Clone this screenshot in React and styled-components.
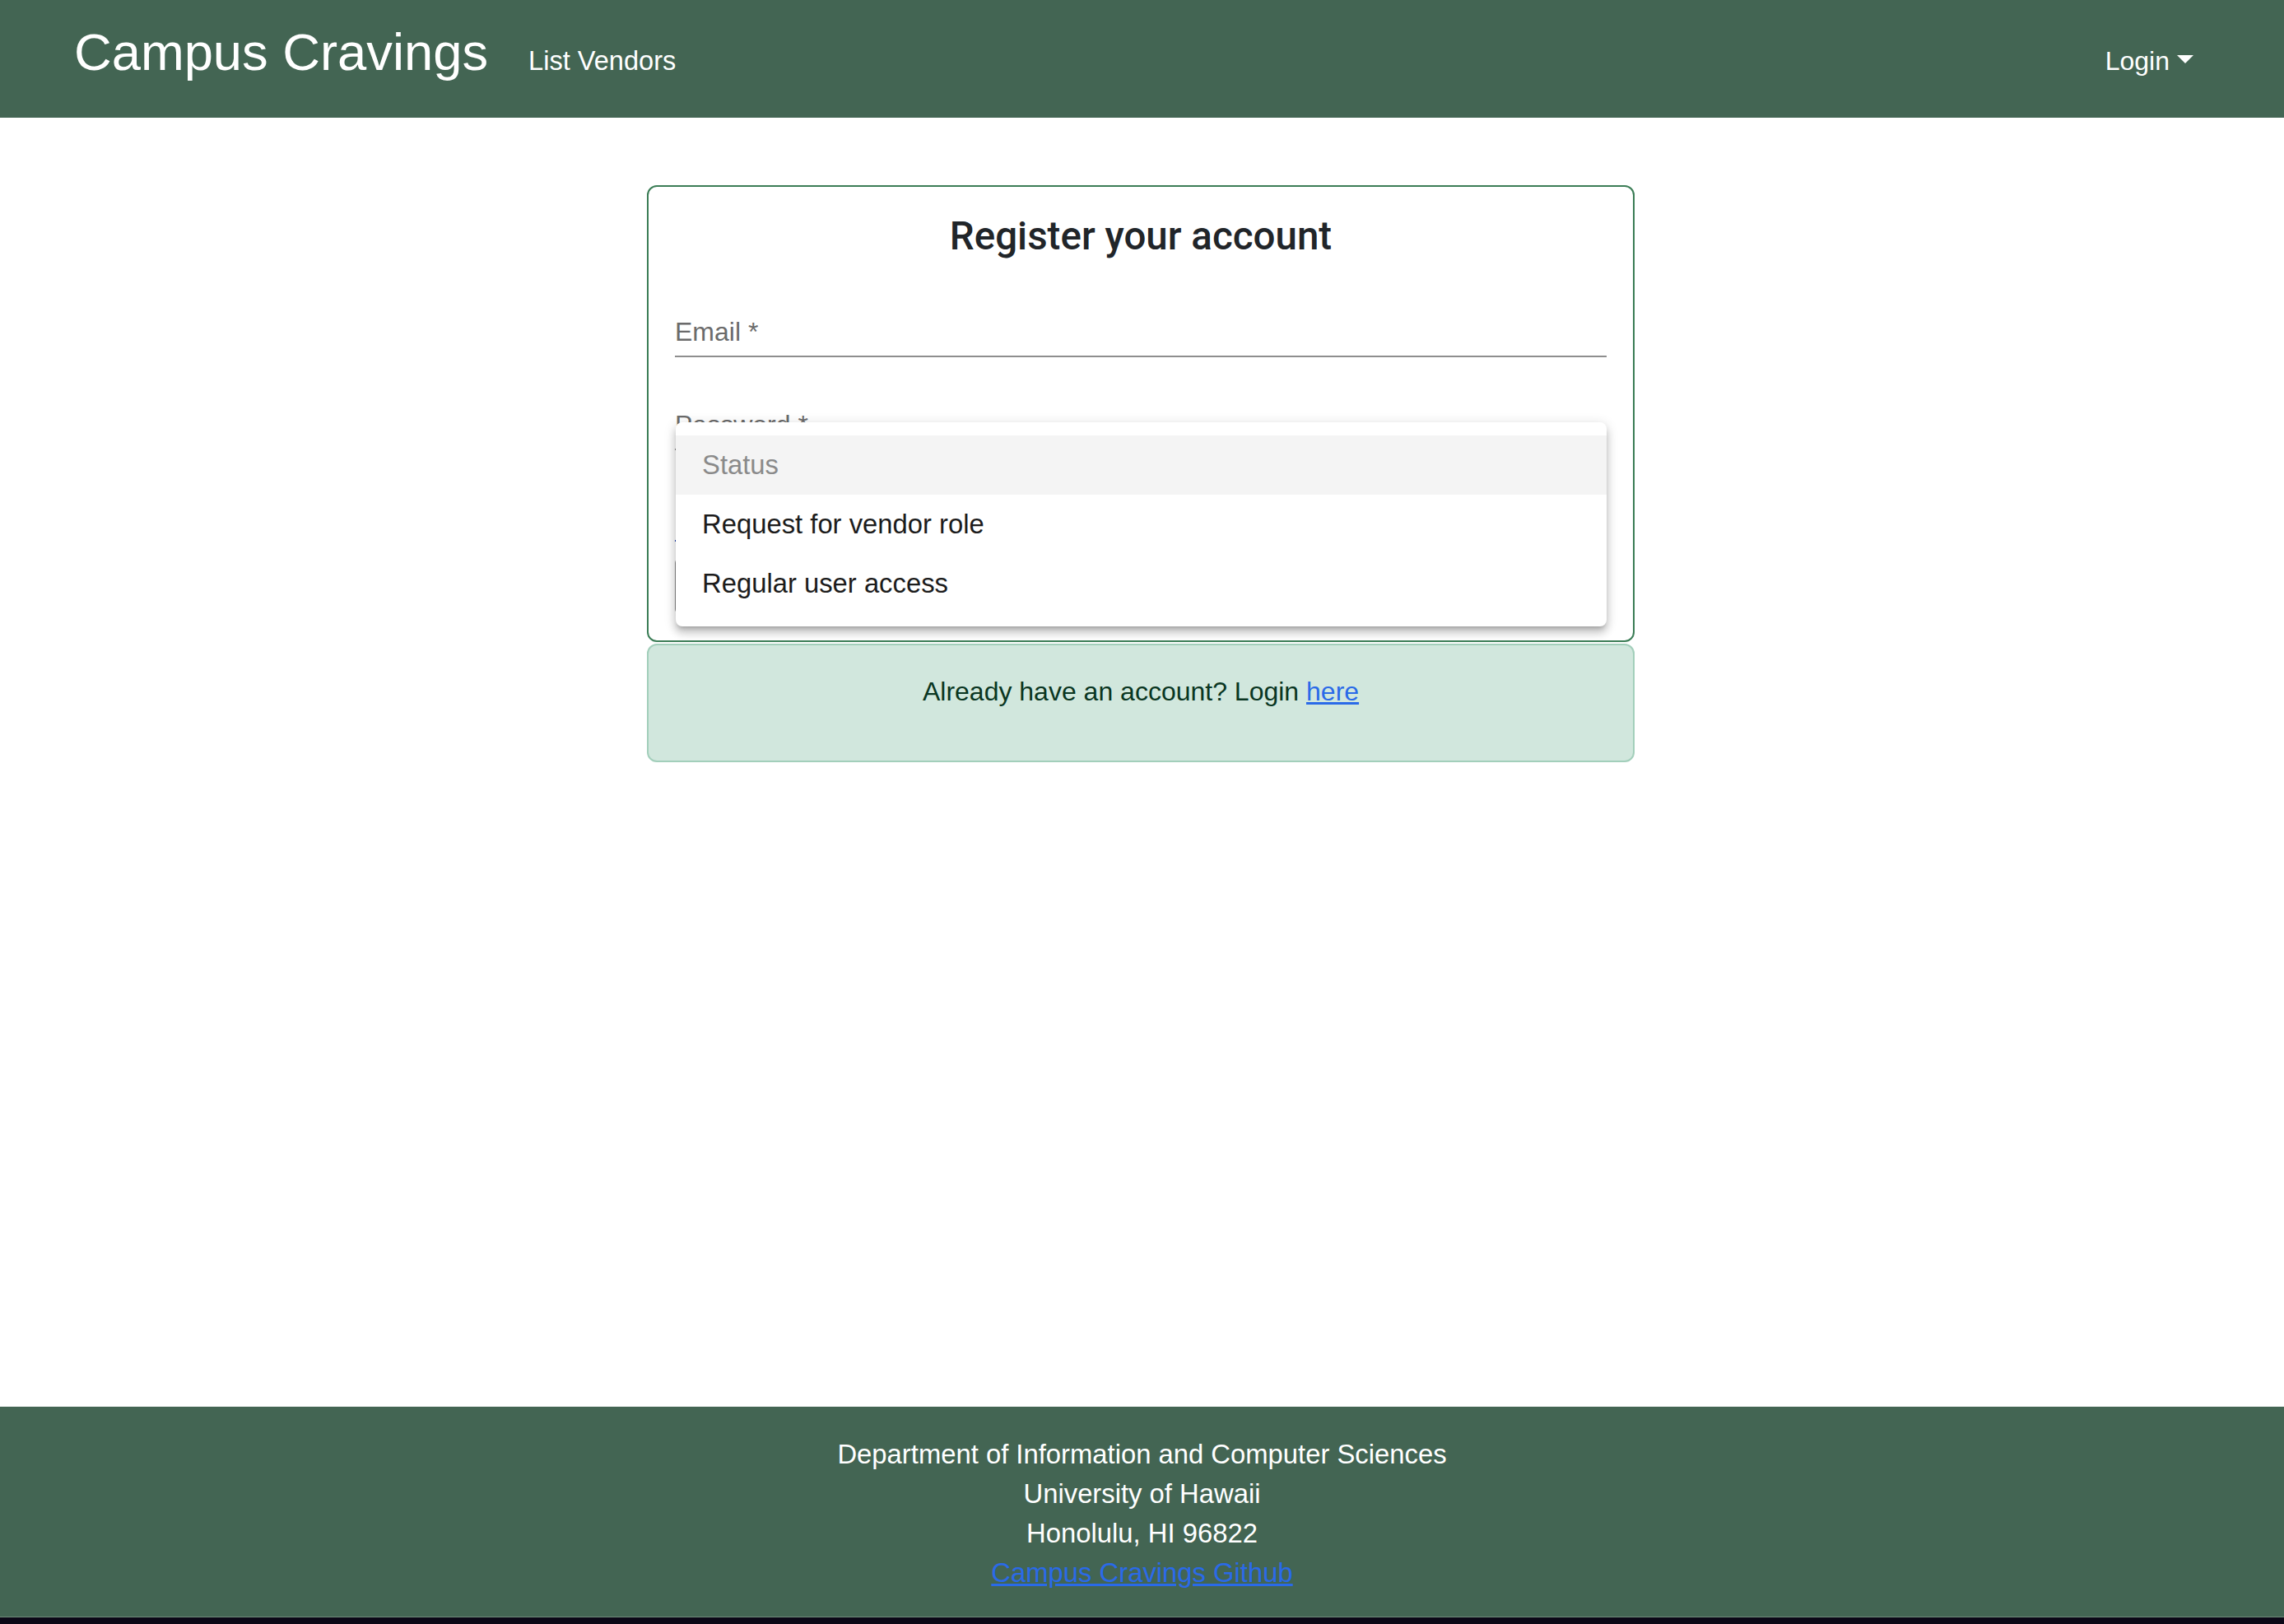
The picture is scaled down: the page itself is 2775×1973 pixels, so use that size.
import React from "react";
import styled, { createGlobalStyle } from "styled-components";

const GlobalStyle = createGlobalStyle`
  html, body {
    margin: 0;
    padding: 0;
    background: #ffffff;
  }
  body {
    font-family: "Liberation Sans", Arial, sans-serif;
    color: #212529;
  }
  * {
    box-sizing: border-box;
  }
`;

const statusOptions = [
  { label: "Status", placeholder: true },
  { label: "Request for vendor role" },
  { label: "Regular user access" },
];

const App = () => {
  return (
    <>
      <GlobalStyle />
      <Page>
        {/* Top navigation */}
        <NavBar>
          <Brand>Campus Cravings</Brand>
          <NavLink>List Vendors</NavLink>
          <LoginToggle>
            Login
            <Caret />
          </LoginToggle>
        </NavBar>

        <Main>
          <Column>
            <Card>
              <Title>Register your account</Title>

              <Field $top={63}>
                <FieldLabel>Email *</FieldLabel>
                <Underline />
              </Field>

              <Field $top={58}>
                <FieldLabel>Password *</FieldLabel>
                <Underline />
              </Field>

              <Field $top={0}>
                <SelectSpace />
                <Underline $focused />
              </Field>

              <SubmitButton />

              {/* Open select menu */}
              <Menu>
                {statusOptions.map((opt) => (
                  <MenuItem key={opt.label} $placeholder={opt.placeholder}>
                    {opt.label}
                  </MenuItem>
                ))}
              </Menu>
            </Card>

            <Alert>
              <AlertText>
                Already have an account? Login <Link href="#">here</Link>
              </AlertText>
            </Alert>
          </Column>
        </Main>

        <Footer>
          <FooterLine>Department of Information and Computer Sciences</FooterLine>
          <FooterLine>University of Hawaii</FooterLine>
          <FooterLine>Honolulu, HI 96822</FooterLine>
          <FooterLine>
            <FooterLink href="#">Campus Cravings Github</FooterLink>
          </FooterLine>
        </Footer>
      </Page>
    </>
  );
};

// Styled Components
const Page = styled.div`
  min-height: 100vh;
  display: flex;
  flex-direction: column;
`;

const NavBar = styled.nav`
  height: 143px;
  background: #436553;
  display: flex;
  align-items: baseline;
  padding: 0 110px 0 90px;
  padding-top: 16px;
`;

const Brand = styled.a`
  font-size: 63.3px;
  line-height: 1.5;
  color: #ffffff;
  margin-right: 49px;
`;

const NavLink = styled.a`
  font-size: 32.6px;
  line-height: 1.5;
  color: #ffffff;
`;

const LoginToggle = styled.a`
  margin-left: auto;
  font-size: 32px;
  line-height: 1.5;
  color: #ffffff;
  display: flex;
  align-items: center;
`;

const Caret = styled.span`
  display: inline-block;
  margin-left: 9px;
  width: 0;
  height: 0;
  border-top: 10px solid #ffffff;
  border-left: 10px solid transparent;
  border-right: 10px solid transparent;
  margin-top: -4px;
`;

const Main = styled.main`
  display: flex;
  justify-content: center;
  padding-top: 82px;
  padding-right: 3px;
`;

const Column = styled.div`
  width: 1200px;
  display: flex;
  flex-direction: column;
  gap: 2px;
`;

const Card = styled.div`
  position: relative;
  border: 2px solid #3b7d56;
  border-radius: 12px;
  padding: 32px;
  background: #ffffff;
  display: flex;
  flex-direction: column;
`;

const Title = styled.h3`
  margin: 0;
  text-align: center;
  font-family: Roboto, "Liberation Sans", sans-serif;
  font-weight: 500;
  font-size: 47.5px;
  line-height: 1.2;
  color: #212529;
`;

const Field = styled.div`
  margin-top: ${(p) => p.$top}px;
  display: flex;
  flex-direction: column;
`;

const FieldLabel = styled.label`
  font-size: 32px;
  line-height: 1.5;
  color: #6b6b6b;
  margin-bottom: 5px;
`;

const SelectSpace = styled.div`
  height: 109px;
`;

const Underline = styled.div`
  height: 2px;
  background: ${(p) => (p.$focused ? "#1f3fb0" : "#8e8e8e")};
`;

const SubmitButton = styled.div`
  margin-top: 20px;
  height: 68px;
  border-radius: 6px;
  background: #8a8a8a;
`;

const Menu = styled.ul`
  position: absolute;
  top: 286px;
  left: 33px;
  right: 32px;
  margin: 0;
  padding: 16px 0;
  list-style: none;
  background: #ffffff;
  border-radius: 8px;
  box-shadow: 0 5px 5px -3px rgba(0, 0, 0, 0.2),
    0 8px 10px 1px rgba(0, 0, 0, 0.14), 0 3px 14px 2px rgba(0, 0, 0, 0.12);
`;

const MenuItem = styled.li`
  height: 72px;
  display: flex;
  align-items: center;
  padding: 0 32px;
  font-size: 32.8px;
  color: ${(p) => (p.$placeholder ? "#8a8a8a" : "#1c1c1c")};
  background: ${(p) => (p.$placeholder ? "#f4f4f4" : "transparent")};
`;

const Alert = styled.div`
  background: #d1e7dd;
  border: 2px solid #a3cfbb;
  border-radius: 12px;
  padding: 32px;
  text-align: center;
`;

const AlertText = styled.p`
  margin: 0 0 28px;
  font-size: 32px;
  line-height: 1.5;
  color: #0a3622;
`;

const Link = styled.a`
  color: #2a6ae8;
  text-decoration: underline;
`;

const Footer = styled.footer`
  margin-top: auto;
  background: #436553;
  padding: 34px 0 30px;
  text-align: center;
  border-bottom: 8px solid #0b0716;
  box-shadow: inset 0 -1px 0 #6f8c7b;
`;

const FooterLine = styled.div`
  font-size: 32.8px;
  line-height: 48px;
  color: #ffffff;
`;

const FooterLink = styled.a`
  color: #2a6ae8;
  text-decoration: underline;
`;

export default App;
